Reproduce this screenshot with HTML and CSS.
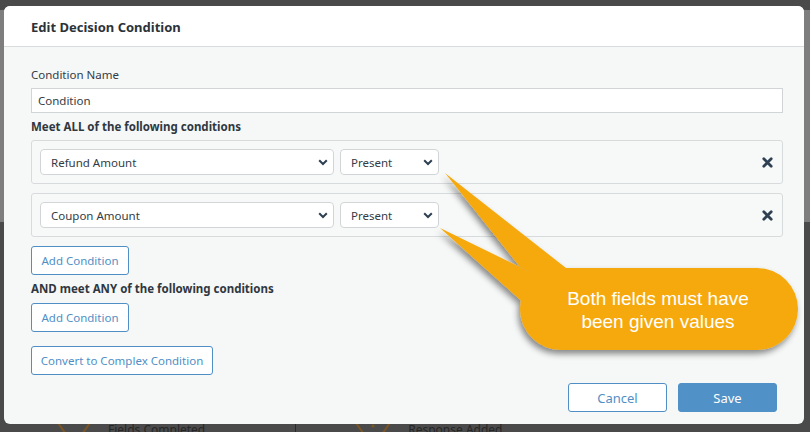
FILE: index.html
```html
<!DOCTYPE html>
<html lang="en">
<head>
  <meta charset="UTF-8">
  <title>Edit Decision Condition</title>
  <link rel="stylesheet" href="styles.css">
</head>
<body>
  <!-- page behind the dialog -->
  <div class="page">
    <div class="page-panel"></div>
    <div class="page-flow">
      <svg class="flow-mark mark-one" width="36" height="14" viewBox="0 0 36 14"><path d="M2 0 L12 14 M34 0 L24 14" stroke="#7a5523" stroke-width="2"/></svg>
      <span class="flow-label label-one">Fields Completed</span>
      <span class="flow-divider"></span>
      <svg class="flow-mark mark-two" width="38" height="14" viewBox="0 0 38 14"><path d="M2 0 L12 14 M36 0 L26 14" stroke="#7a5523" stroke-width="2"/><circle cx="19" cy="3" r="1.6" fill="#7a5523"/></svg>
      <span class="flow-label label-two">Response Added</span>
    </div>
  </div>

  <div class="modal">
    <div class="modal-header">Edit Decision Condition</div>

    <div class="modal-body">
      <label class="field-label">Condition Name</label>
      <div class="text-input">Condition</div>

      <div class="group-title">Meet ALL of the following conditions</div>

      <div class="condition-row">
        <div class="select field-select">
          <span>Refund Amount</span>
          <svg width="10" height="7" viewBox="0 0 10 7"><path d="M1.2 1.2 L5 5 L8.8 1.2" fill="none" stroke="#2f4053" stroke-width="2"/></svg>
        </div>
        <div class="select op-select">
          <span>Present</span>
          <svg width="10" height="7" viewBox="0 0 10 7"><path d="M1.2 1.2 L5 5 L8.8 1.2" fill="none" stroke="#2f4053" stroke-width="2"/></svg>
        </div>
        <svg class="remove" width="11" height="11" viewBox="0 0 11 11"><path d="M1.8 1.8 L9.2 9.2 M9.2 1.8 L1.8 9.2" stroke="#2f4053" stroke-width="2.8" stroke-linecap="round"/></svg>
      </div>

      <div class="condition-row">
        <div class="select field-select">
          <span>Coupon Amount</span>
          <svg width="10" height="7" viewBox="0 0 10 7"><path d="M1.2 1.2 L5 5 L8.8 1.2" fill="none" stroke="#2f4053" stroke-width="2"/></svg>
        </div>
        <div class="select op-select">
          <span>Present</span>
          <svg width="10" height="7" viewBox="0 0 10 7"><path d="M1.2 1.2 L5 5 L8.8 1.2" fill="none" stroke="#2f4053" stroke-width="2"/></svg>
        </div>
        <svg class="remove" width="11" height="11" viewBox="0 0 11 11"><path d="M1.8 1.8 L9.2 9.2 M9.2 1.8 L1.8 9.2" stroke="#2f4053" stroke-width="2.8" stroke-linecap="round"/></svg>
      </div>

      <button class="btn btn-outline add-btn">Add Condition</button>

      <div class="group-title any-title">AND meet ANY of the following conditions</div>

      <button class="btn btn-outline add-btn any-add">Add Condition</button>

      <button class="btn btn-outline convert-btn">Convert to Complex Condition</button>

      <div class="modal-footer">
        <button class="btn btn-outline footer-btn">Cancel</button>
        <button class="btn btn-primary footer-btn">Save</button>
      </div>
    </div>
  </div>

  <!-- annotation callout -->
  <svg class="callout" width="810" height="432" viewBox="0 0 810 432">
    <defs>
      <filter id="shadow" x="-20%" y="-20%" width="140%" height="160%">
        <feDropShadow dx="-2" dy="4" stdDeviation="3" flood-color="#000" flood-opacity="0.45"/>
      </filter>
    </defs>
    <g fill="#f6a90d" filter="url(#shadow)">
      <polygon points="445,173 520,267 560,290 566,268"/>
      <polygon points="440,228 520,267 580,300 528,307"/>
      <rect x="520" y="268" width="278" height="82" rx="41" ry="41"/>
    </g>
    <text class="callout-text" x="658" y="305" text-anchor="middle">Both fields must have</text>
    <text class="callout-text" x="658" y="328" text-anchor="middle">been given values</text>
  </svg>
</body>
</html>
```

FILE: styles.css
```css
body {
  margin: 0;
  width: 810px;
  height: 432px;
  overflow: hidden;
  background: #4a4a4a;
  font-family: 'Noto Sans', 'Open Sans', sans-serif;
  color: #333c46;
  position: relative;
}

/* dimmed page behind the modal */
.page {
  padding-top: 10px;
}

.page-panel {
  height: 212px;
  background: #7e7e7e;
}

.page-flow {
  display: flex;
  align-items: center;
  margin-top: 194px;
  height: 20px;
  font-size: 12px;
  color: #262626;
}

.flow-mark {
  display: block;
  margin-top: 8px;
}

.mark-one {
  margin-left: 56px;
}

.label-one {
  margin-left: 16px;
  margin-top: 6px;
}

.flow-divider {
  width: 1px;
  height: 14px;
  background: #2a2a2a;
  margin-left: 90px;
  margin-top: 8px;
}

.mark-two {
  margin-left: 58px;
}

.label-two {
  margin-left: 16px;
  margin-top: 6px;
}

/* dialog */
.modal {
  position: absolute;
  left: 4px;
  top: 6px;
  width: 800px;
  height: 418px;
  background: #f6f7f7;
  border-radius: 6px;
  overflow: hidden;
}

.modal-header {
  height: 40px;
  line-height: 42px;
  padding-left: 27px;
  background: #fff;
  border-bottom: 1px solid #d9dcdd;
  font-size: 13px;
  font-weight: bold;
  color: #2b323a;
}

.modal-body {
  padding: 20px 21px 0 27px;
}

.field-label {
  display: block;
  font-size: 11.5px;
  line-height: 16px;
}

.text-input {
  margin-top: 5px;
  height: 23px;
  line-height: 23px;
  padding-left: 6px;
  background: #fff;
  border: 1px solid #d2d5d7;
  font-size: 11.5px;
}

.group-title {
  margin-top: 6px;
  font-size: 11.5px;
  line-height: 16px;
  font-weight: bold;
  color: #2f3740;
}

.condition-row {
  display: flex;
  align-items: center;
  gap: 6px;
  margin-top: 5px;
  height: 26px;
  padding: 8px 9px 8px 8px;
  background: #f7f8f8;
  border: 1px solid #d8dbdc;
  border-radius: 3px;
}

.condition-row + .condition-row {
  margin-top: 9px;
}

.select {
  display: flex;
  align-items: center;
  justify-content: space-between;
  box-sizing: border-box;
  height: 26px;
  padding: 0 5px 0 10px;
  background: #fff;
  border: 1px solid #d2d5d7;
  border-radius: 4px;
  font-size: 11.5px;
}

.field-select {
  width: 294px;
}

.op-select {
  width: 99px;
}

.remove {
  margin-left: auto;
}

.btn {
  display: block;
  box-sizing: border-box;
  height: 29px;
  padding: 0;
  border-radius: 3px;
  font-family: inherit;
  font-size: 11.5px;
  white-space: nowrap;
  cursor: pointer;
}

.btn-outline {
  background: #fff;
  border: 1px solid #4f8fc6;
  color: #4f8fc6;
}

.btn-primary {
  background: #5091c7;
  border: 1px solid #5091c7;
  color: #fff;
}

.add-btn {
  width: 98px;
  margin-top: 9px;
}

.any-title {
  margin-top: 6px;
}

.any-add {
  margin-top: 6px;
}

.convert-btn {
  width: 182px;
  margin-top: 14px;
}

.modal-footer {
  display: flex;
  justify-content: flex-end;
  gap: 11px;
  margin-top: 8px;
  padding-right: 6px;
}

.footer-btn {
  width: 99px;
  font-size: 13px;
}

/* annotation */
.callout {
  position: absolute;
  left: 0;
  top: 0;
  pointer-events: none;
}

.callout-text {
  font-family: 'Liberation Sans', Arial, sans-serif;
  font-size: 19px;
  fill: #fff;
}
```
